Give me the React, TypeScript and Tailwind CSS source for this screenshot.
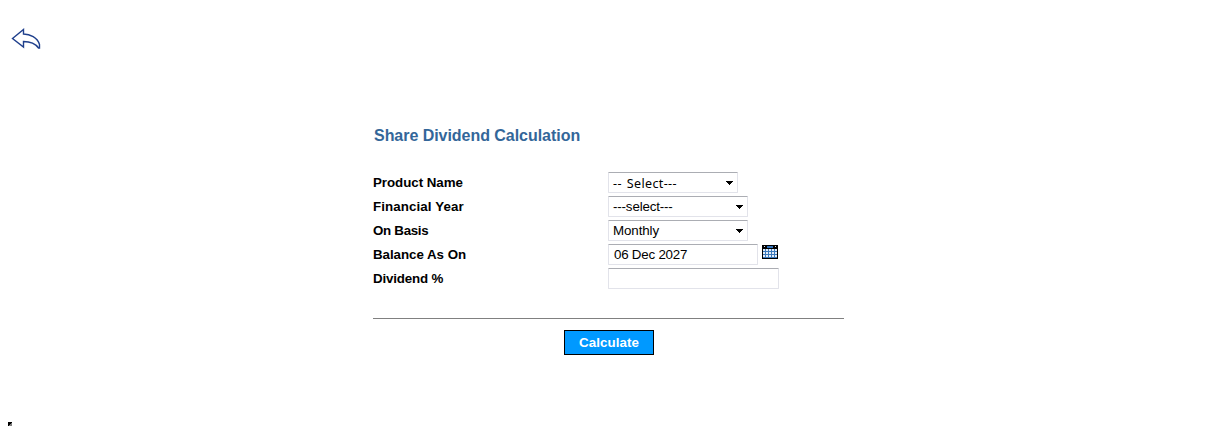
import type { ReactNode } from "react";

const fieldBox =
  "flex h-[21px] items-center rounded-[1px] border border-[#e2e3ea] border-t-[#abadb3] bg-white text-[13.33px] leading-none text-black";

function Row({ label, tracking, children }: { label: string; tracking: string; children: ReactNode }) {
  return (
    <div className="flex h-6 items-start">
      <div className={`w-[235px] text-[13.33px] font-bold leading-[21px] text-black ${tracking}`}>{label}</div>
      {children}
    </div>
  );
}

function Caret() {
  return (
    <svg width="8" height="4" viewBox="0 0 8 4" shapeRendering="crispEdges" className="mr-[3px] shrink-0">
      <path d="M0 0H7V1H6V2H5V3H4V4H3V3H2V2H1V1H0Z" fill="#000" />
    </svg>
  );
}

function BackArrow() {
  return (
    <svg width="30" height="22" viewBox="0 0 30 22" className="block">
      <path
        d="M1.5 10.5L12.5 1.5V6C19 6 26.5 9.5 28.5 16.5V20H27.5C24 15 19 13.5 12.5 13.5V19Z"
        fill="none"
        stroke="#1f3f8c"
        strokeWidth="1.4"
      />
    </svg>
  );
}

function CalendarIcon() {
  const columns = [1, 4, 7, 10, 13];
  return (
    <svg width="16" height="14" viewBox="0 0 16 14" shapeRendering="crispEdges" className="ml-1 mt-px shrink-0">
      <rect width="16" height="14" fill="#000" />
      <rect x="1" y="4" width="14" height="9" fill="#3b7abd" />
      <rect x="5" y="1" width="6" height="2" fill="#2f6fb7" />
      <rect x="2" y="1" width="1" height="1" fill="#d5e2f0" />
      <rect x="13" y="1" width="1" height="1" fill="#d5e2f0" />
      {[4, 7, 10].map((y) =>
        columns.map((x) => <rect key={`${x}-${y}`} x={x} y={y} width="2" height="2" fill="#e4edf7" />)
      )}
    </svg>
  );
}

export default function App() {
  return (
    <main className="flex h-[442px] w-full flex-col overflow-hidden bg-white font-['Liberation_Sans',Arial,sans-serif]">
      <div className="h-[126px] pl-[11px] pt-[28px]">
        <BackArrow />
      </div>
      <section className="ml-[373px] w-[471px]">
        <h1 className="ml-px h-[46px] whitespace-nowrap text-[16px] font-bold leading-[19px] tracking-[-0.04px] text-[#336699]">
          Share Dividend Calculation
        </h1>
        <Row label="Product Name" tracking="tracking-[-0.04px]">
          <div className={`${fieldBox} w-[130px] justify-between pl-1`}>
            <span className="whitespace-nowrap pt-[3px] font-['Noto_Sans',sans-serif] text-[12.5px] tracking-[0.35px] [word-spacing:1.5px]">-- Select---</span>
            <Caret />
          </div>
        </Row>
        <Row label="Financial Year" tracking="tracking-[0.1px]">
          <div className={`${fieldBox} w-[140px] justify-between pl-1`}>
            <span className="tracking-[-0.15px]">---select---</span>
            <Caret />
          </div>
        </Row>
        <Row label="On Basis" tracking="tracking-[-0.3px]">
          <div className={`${fieldBox} w-[140px] justify-between pl-1`}>
            <span className="tracking-[-0.1px]">Monthly</span>
            <Caret />
          </div>
        </Row>
        <Row label="Balance As On" tracking="tracking-[-0.04px]">
          <div className={`${fieldBox} w-[150px] pl-[5px]`}>
            <span className="whitespace-nowrap tracking-[-0.22px]">06 Dec 2027</span>
          </div>
          <CalendarIcon />
        </Row>
        <Row label="Dividend %" tracking="tracking-[-0.16px]">
          <div className={`${fieldBox} w-[171px]`} />
        </Row>
        <div className="mt-[26px] h-px bg-[#808080]" />
        <button className="ml-[191px] mt-[11px] block h-[25px] w-[90px] border border-black bg-[#0099ff] text-center text-[13.33px] font-bold leading-[23px] tracking-[0.1px] text-white">
          Calculate
        </button>
      </section>
      <div className="ml-2 mt-[67px]">
        <svg width="4" height="4" viewBox="0 0 4 4" shapeRendering="crispEdges" className="block">
          <rect width="4" height="4" fill="#808080" />
          <path d="M0 0H4V1H3V2H2V3H1V4H0Z" fill="#000" />
        </svg>
      </div>
    </main>
  );
}
